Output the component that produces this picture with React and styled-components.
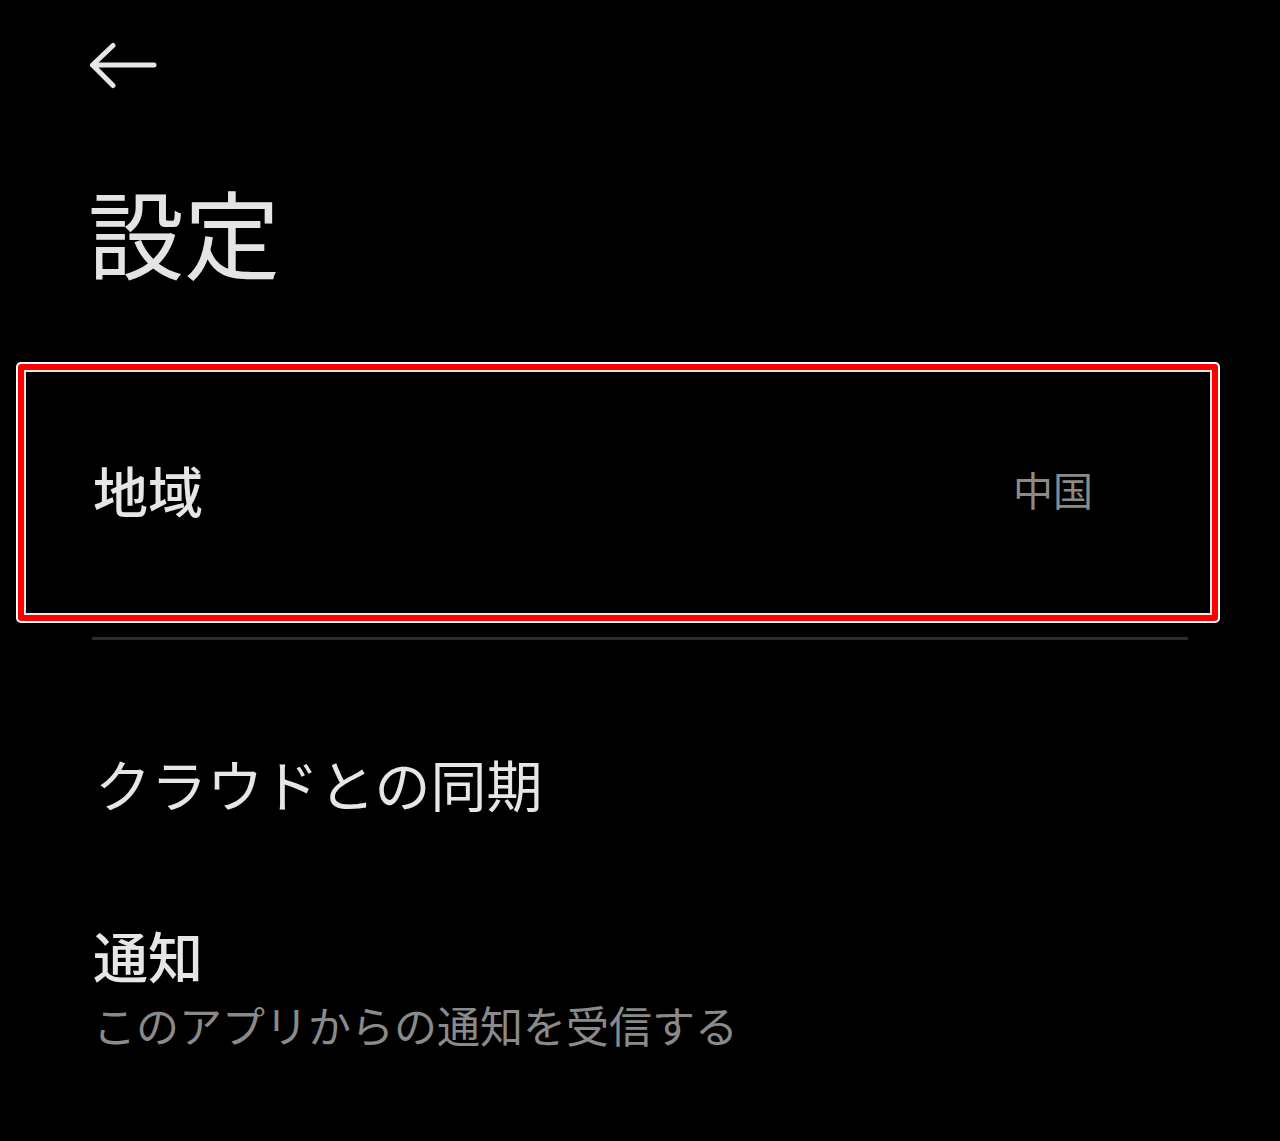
import React from "react";
import styled, { createGlobalStyle } from "styled-components";

const Global = createGlobalStyle`
  html, body { margin: 0; padding: 0; background: #000; }
  body { font-family: "Noto Sans CJK JP", "Noto Sans", sans-serif; }
`;

const Page = styled.div`
  background: #000;
  min-height: 1141px;
  width: 1280px;
  box-sizing: border-box;
  padding-top: 42px;
  color: #e6e6e6;
`;

const Header = styled.header`
  padding-left: 90px;
  height: 48px;
  display: flex;
  align-items: flex-start;
`;

const BackButton = styled.button`
  background: none;
  border: 0;
  padding: 0;
  margin: 0;
  width: 68px;
  height: 48px;
  cursor: pointer;
  display: block;
`;

const Title = styled.h1`
  margin: 93px 0 0 88px;
  font-size: 96px;
  line-height: 1;
  font-weight: 400;
  color: #e4e4e4;
`;

const HighlightCard = styled.div`
  margin: 83px 0 0 16px;
  width: 1204px;
  height: 261px;
  box-sizing: border-box;
  border: 2px solid #fff;
  border-radius: 5px;
  box-shadow: inset 0 0 0 6px #ff0000, inset 0 0 0 8px #e8e8e8;
  display: flex;
  align-items: center;
  justify-content: space-between;
  padding: 0 125px 7px 75px;
`;

const ItemLabel = styled.div`
  font-size: ${(p) => p.$size || 55}px;
  line-height: 1;
  font-weight: ${(p) => p.$weight || 500};
  color: #e6e6e6;
`;

const ItemValue = styled.div`
  font-size: 40px;
  line-height: 1;
  color: #8a8a8a;
`;

const Divider = styled.div`
  margin: 14px 0 0 92px;
  width: 1096px;
  height: 3px;
  background: #2c2c2c;
`;

const Item = styled.div`
  padding-left: ${(p) => p.$indent || 94}px;
  margin-top: ${(p) => p.$top}px;
`;

const Subtitle = styled.div`
  margin-top: 21px;
  font-size: 43px;
  line-height: 1;
  color: #8a8a8a;
`;

const BackArrow = () => (
  <svg width="68" height="48" viewBox="0 0 68 48" fill="none">
    <path
      d="M2.5 23 H64 M23 3.5 L2.5 23 L23 43.5"
      stroke="#e6e6e6"
      strokeWidth="5"
      strokeLinecap="round"
      strokeLinejoin="round"
    />
  </svg>
);

export default function App() {
  return (
    <>
      <Global />
      <Page>
        <Header>
          <BackButton aria-label="戻る">
            <BackArrow />
          </BackButton>
        </Header>
        <Title>設定</Title>
        <HighlightCard>
          <ItemLabel>地域</ItemLabel>
          <ItemValue>中国</ItemValue>
        </HighlightCard>
        <Divider />
        <Item $top={115} $indent={95}>
          <ItemLabel $size={56} $weight={400}>クラウドとの同期</ItemLabel>
        </Item>
        <Item $top={116} $indent={93}>
          <ItemLabel>通知</ItemLabel>
          <Subtitle>このアプリからの通知を受信する</Subtitle>
        </Item>
      </Page>
    </>
  );
}
